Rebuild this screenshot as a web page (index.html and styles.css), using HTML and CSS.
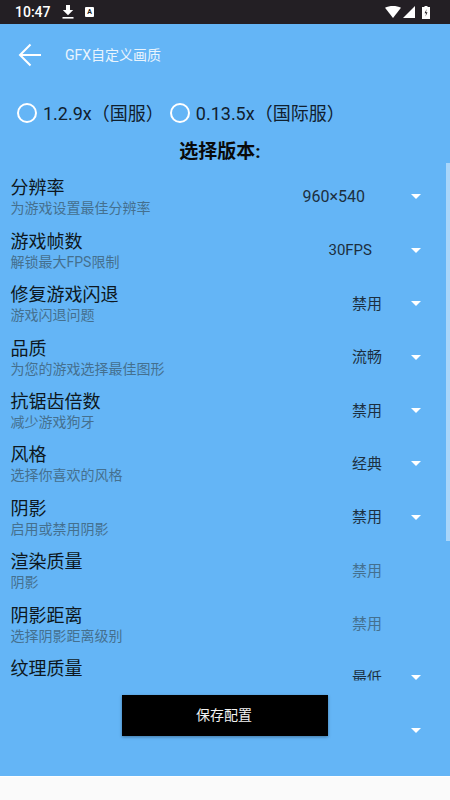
FILE: index.html
```html
<!DOCTYPE html>
<html lang="zh-CN">
<head>
    <meta charset="UTF-8">
    <meta name="viewport" content="width=device-width, initial-scale=1.0">
    <title>GFX自定义画质</title>
    <link rel="stylesheet" href="styles.css">
</head>
<body>
    <header class="status-bar">
        <span class="status-time">10:47</span>
        <svg class="status-icon" width="12" height="14" viewBox="0 0 12 14">
            <path d="M4 0h4v5h3.2L6 10.2.8 5H4z" fill="#fff"/>
            <rect x="0.5" y="12" width="11" height="1.6" fill="#fff"/>
        </svg>
        <span class="status-a">A</span>
        <span class="status-spacer"></span>
        <svg width="16" height="12" viewBox="0 0 16 12">
            <path d="M0 1.8C2.2.6 5 0 8 0s5.800.6 8 1.800L8 12z" fill="#fff"/>
        </svg>
        <svg class="status-signal" width="12" height="12" viewBox="0 0 12 12">
            <path d="M12 0v12H0z" fill="#fff"/>
        </svg>
        <svg class="status-battery" width="8" height="13" viewBox="0 0 8 13">
            <path d="M2.500 0h3v1H8v12H0V1h2.500z" fill="#fff"/>
            <path d="M4.600 3 2.600 7.200h1.500L3.500 10.500l2-4.200H4z" fill="#231f24"/>
        </svg>
    </header>

    <main class="screen">
        <div class="toolbar">
            <svg class="back-icon" width="24" height="24" viewBox="0 0 24 24">
                <path d="M23 12H2M12.500 1.500 2 12l10.500 10.500" fill="none" stroke="#fff" stroke-width="2"/>
            </svg>
            <span class="toolbar-title">GFX自定义画质</span>
        </div>

        <div class="version-group">
            <label class="version"><span class="radio"></span><span class="version-text">1.2.9x（国服）</span></label>
            <label class="version"><span class="radio"></span><span class="version-text">0.13.5x（国际服）</span></label>
        </div>
        <h2 class="version-heading">选择版本:</h2>

        <section class="settings">
            <div class="row">
                <div class="row-text"><div class="row-title">分辨率</div><div class="row-sub">为游戏设置最佳分辨率</div></div>
                <span class="row-value value-wide">960×540</span><span class="arrow"></span>
            </div>
            <div class="row">
                <div class="row-text"><div class="row-title">游戏帧数</div><div class="row-sub">解锁最大FPS限制</div></div>
                <span class="row-value value-mid">30FPS</span><span class="arrow"></span>
            </div>
            <div class="row">
                <div class="row-text"><div class="row-title">修复游戏闪退</div><div class="row-sub">游戏闪退问题</div></div>
                <span class="row-value">禁用</span><span class="arrow"></span>
            </div>
            <div class="row">
                <div class="row-text"><div class="row-title">品质</div><div class="row-sub">为您的游戏选择最佳图形</div></div>
                <span class="row-value">流畅</span><span class="arrow"></span>
            </div>
            <div class="row">
                <div class="row-text"><div class="row-title">抗锯齿倍数</div><div class="row-sub">减少游戏狗牙</div></div>
                <span class="row-value">禁用</span><span class="arrow"></span>
            </div>
            <div class="row">
                <div class="row-text"><div class="row-title">风格</div><div class="row-sub">选择你喜欢的风格</div></div>
                <span class="row-value">经典</span><span class="arrow"></span>
            </div>
            <div class="row">
                <div class="row-text"><div class="row-title">阴影</div><div class="row-sub">启用或禁用阴影</div></div>
                <span class="row-value">禁用</span><span class="arrow"></span>
            </div>
            <div class="row">
                <div class="row-text"><div class="row-title">渲染质量</div><div class="row-sub">阴影</div></div>
                <span class="row-value value-off">禁用</span><span class="arrow arrow-none"></span>
            </div>
            <div class="row">
                <div class="row-text"><div class="row-title">阴影距离</div><div class="row-sub">选择阴影距离级别</div></div>
                <span class="row-value value-off">禁用</span><span class="arrow arrow-none"></span>
            </div>
            <div class="row">
                <div class="row-text"><div class="row-title">纹理质量</div><div class="row-sub row-sub-empty"></div></div>
                <span class="row-value value-clipped">最低</span><span class="arrow"></span>
            </div>
            <div class="row">
                <div class="row-text"></div>
                <span class="arrow"></span>
            </div>
        </section>

        <div class="scroll-thumb"></div>
        <button class="save-button">保存配置</button>
    </main>

    <footer class="nav-bar"></footer>
</body>
</html>
```

FILE: styles.css
```css
* {
    margin: 0;
    padding: 0;
    box-sizing: border-box;
}

body {
    width: 450px;
    height: 800px;
    overflow: hidden;
    background: #fafafa;
    font-family: Roboto, "Noto Sans CJK SC", sans-serif;
}

/* Status bar */
.status-bar {
    height: 24px;
    background: #231f24;
    display: flex;
    align-items: center;
    padding: 0 15px;
    color: #fff;
}

.status-time {
    font-size: 14px;
    font-weight: 500;
    width: 47px;
}

.status-a {
    width: 9px;
    height: 10px;
    margin-left: 11px;
    background: #fff;
    border-radius: 1px;
    color: #231f24;
    font-size: 7px;
    font-weight: 700;
    line-height: 10px;
    text-align: center;
}

.status-spacer {
    flex: 1;
}

.status-signal {
    margin-left: 2px;
}

.status-battery {
    margin-left: 7px;
    margin-right: 5px;
}

/* Main blue screen */
.screen {
    position: relative;
    height: 752px;
    background: #64b5f6;
    overflow: hidden;
}

.toolbar {
    height: 62px;
    display: flex;
    align-items: center;
    padding-left: 18px;
}

.toolbar-title {
    margin-left: 23px;
    margin-bottom: 2px;
    font-size: 14px;
    color: #e9f4fd;
}

.version-group {
    height: 54px;
    display: flex;
    align-items: center;
    padding-left: 17px;
}

.version {
    display: flex;
    align-items: center;
    font-size: 18px;
    color: #10202e;
    margin-right: 6px;
}

.version-text {
    margin-bottom: 2px;
}

.radio {
    width: 20px;
    height: 20px;
    margin-right: 6px;
    border: 2px solid #fff;
    border-radius: 50%;
}

.version-heading {
    height: 30.3px;
    padding: 2px 10px 0 0;
    font-size: 19px;
    line-height: 20px;
    font-weight: 700;
    text-align: center;
    color: #0a0a0a;
}

/* Settings list */
.row {
    height: 53.4px;
    display: flex;
    align-items: center;
    padding: 0 29px 0 10.5px;
}

.row-text {
    flex: 1;
    padding-top: 2px;
}

.row-title {
    font-size: 18px;
    line-height: 22px;
    color: #0d1720;
}

.row-sub {
    font-size: 14px;
    line-height: 19px;
    color: #44708f;
}

.row-sub-empty {
    height: 19px;
}

.row-value {
    margin-right: 29px;
    font-size: 15px;
    line-height: 18px;
    color: #1c2f40;
}

.value-wide {
    margin-right: 46px;
    font-size: 16px;
}

.value-mid {
    margin-right: 39px;
}

.value-off {
    color: #44708f;
}

.value-clipped {
    clip-path: inset(0 0 6px 0);
}

.arrow {
    width: 0;
    height: 0;
    border-left: 5px solid transparent;
    border-right: 5px solid transparent;
    border-top: 5px solid #fff;
}

.arrow-none {
    border-top-color: transparent;
}

/* Overlays */
.scroll-thumb {
    position: absolute;
    top: 139px;
    right: 0;
    width: 4px;
    height: 378px;
    background: #a9d6fa;
}

.save-button {
    position: absolute;
    left: 122px;
    top: 671px;
    width: 206px;
    height: 41px;
    padding: 0 2px 3px 0;
    border: none;
    background: #000;
    color: #f2f2f2;
    font-family: inherit;
    font-size: 14px;
    box-shadow: 0 1px 3px rgba(0, 0, 0, 0.35);
}

.nav-bar {
    height: 24px;
    background: #fafafa;
    border-top: 1px solid #fff;
}
```
